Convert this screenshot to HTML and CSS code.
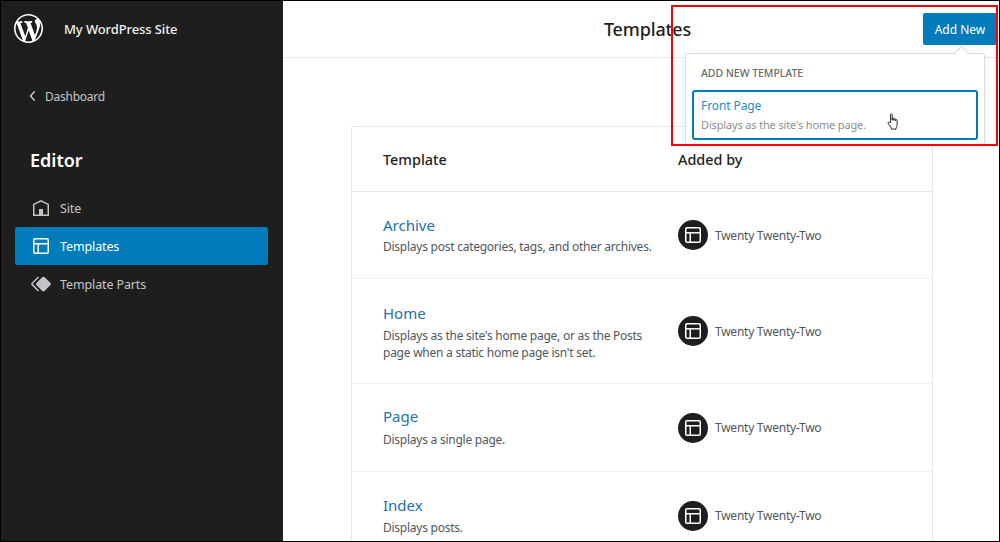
FILE: index.html
```html
<!DOCTYPE html>
<html lang="en">
<head>
    <meta charset="UTF-8">
    <meta name="viewport" content="width=device-width, initial-scale=1.0">
    <title>Templates</title>
    <link rel="stylesheet" href="styles.css">
</head>
<body>
    <div class="editor">
        <aside class="sidebar">
            <div class="site-row">
                <svg class="wp-logo" viewBox="0 0 20 20"><path d="M20 10c0-5.51-4.49-10-10-10C4.48 0 0 4.49 0 10c0 5.52 4.48 10 10 10 5.51 0 10-4.48 10-10zM7.78 15.37L4.37 6.22c.55-.02 1.17-.08 1.17-.08.5-.06.44-1.13-.06-1.11 0 0-1.45.11-2.37.11-.18 0-.37 0-.58-.01C4.12 2.69 6.87 1.11 10 1.11c2.33 0 4.45.87 6.05 2.34-.68-.11-1.65.39-1.65 1.58 0 .74.45 1.36.9 2.1.35.61.55 1.36.55 2.46 0 1.49-1.4 5-1.4 5l-3.03-8.37c.54-.02.82-.17.82-.17.5-.05.44-1.25-.06-1.22 0 0-1.44.12-2.38.12-.87 0-2.33-.12-2.33-.12-.5-.03-.56 1.2-.06 1.22l.92.08 1.26 3.41zM17.41 10c.24-.64.74-1.87.43-4.25.7 1.29 1.05 2.71 1.05 4.25 0 3.29-1.73 6.24-4.4 7.78.97-2.59 1.94-5.2 2.92-7.78zM6.1 18.09C3.12 16.65 1.11 13.53 1.11 10c0-1.3.23-2.48.72-3.59C3.25 10.3 4.67 14.2 6.1 18.09zm4.03-6.63l2.58 6.98c-.86.29-1.76.45-2.71.45-.79 0-1.57-.11-2.29-.33.81-2.38 1.62-4.74 2.42-7.1z"/></svg>
                <span class="site-name">My WordPress Site</span>
            </div>
            <a class="back-link">
                <svg class="back-icon" viewBox="0 0 24 24"><path d="M14.6 7l-1.2-1L8 12l5.4 6 1.2-1-4.6-5z"/></svg>
                <span>Dashboard</span>
            </a>
            <h2 class="sidebar-title">Editor</h2>
            <ul class="nav-list">
                <li class="nav-item">
                    <svg class="nav-icon" viewBox="0 0 24 24"><path d="M12 4L4 7.9V20h16V7.9L12 4zm6.5 14.5H14V13h-4v5.5H5.5V8.8L12 5.7l6.5 3.1v9.7z"/></svg>
                    <span>Site</span>
                </li>
                <li class="nav-item active">
                    <svg class="nav-icon" viewBox="0 0 24 24"><path d="M18 5.5H6a.5.5 0 00-.5.5v3h13V6a.5.5 0 00-.5-.5zm.5 5H10v8h8a.5.5 0 00.5-.5v-7.5zm-10 0h-3V18a.5.5 0 00.5.5h2.5v-8zM6 4h12a2 2 0 012 2v12a2 2 0 01-2 2H6a2 2 0 01-2-2V6a2 2 0 012-2z"/></svg>
                    <span>Templates</span>
                </li>
                <li class="nav-item">
                    <svg class="nav-icon" viewBox="0 0 24 24"><path d="M21.3 10.8l-5.6-5.6c-.7-.7-1.8-.7-2.5 0l-5.6 5.6c-.7.7-.7 1.8 0 2.5l5.6 5.6c.3.3.8.5 1.2.5s.9-.2 1.2-.5l5.6-5.6c.8-.7.8-1.9.1-2.5zm-17.6 1L10 5.5l-1-1-6.3 6.3c-.7.7-.7 1.8 0 2.5L9 19.5l1.1-1.1-6.3-6.3c-.2 0-.2-.2-.1-.3z"/></svg>
                    <span>Template Parts</span>
                </li>
            </ul>
        </aside>

        <main class="content">
            <header class="content-header">
                <h1 class="page-title">Templates</h1>
                <button class="add-new">Add New</button>
            </header>

            <section class="template-table">
                <div class="table-row table-head">
                    <div class="col-name">Template</div>
                    <div class="col-author">Added by</div>
                </div>
                <div class="table-row row-archive">
                    <div class="col-name">
                        <a class="template-link">Archive</a>
                        <p class="template-desc">Displays post categories, tags, and other archives.</p>
                    </div>
                    <div class="col-author">
                        <span class="author-badge"><svg viewBox="0 0 24 24"><path d="M18 5.5H6a.5.5 0 00-.5.5v3h13V6a.5.5 0 00-.5-.5zm.5 5H10v8h8a.5.5 0 00.5-.5v-7.5zm-10 0h-3V18a.5.5 0 00.5.5h2.5v-8zM6 4h12a2 2 0 012 2v12a2 2 0 01-2 2H6a2 2 0 01-2-2V6a2 2 0 012-2z"/></svg></span>
                        <span>Twenty Twenty-Two</span>
                    </div>
                </div>
                <div class="table-row row-home">
                    <div class="col-name">
                        <a class="template-link">Home</a>
                        <p class="template-desc">Displays as the site's home page, or as the Posts<br>page when a static home page isn't set.</p>
                    </div>
                    <div class="col-author">
                        <span class="author-badge"><svg viewBox="0 0 24 24"><path d="M18 5.5H6a.5.5 0 00-.5.5v3h13V6a.5.5 0 00-.5-.5zm.5 5H10v8h8a.5.5 0 00.5-.5v-7.5zm-10 0h-3V18a.5.5 0 00.5.5h2.5v-8zM6 4h12a2 2 0 012 2v12a2 2 0 01-2 2H6a2 2 0 01-2-2V6a2 2 0 012-2z"/></svg></span>
                        <span>Twenty Twenty-Two</span>
                    </div>
                </div>
                <div class="table-row row-page">
                    <div class="col-name">
                        <a class="template-link">Page</a>
                        <p class="template-desc">Displays a single page.</p>
                    </div>
                    <div class="col-author">
                        <span class="author-badge"><svg viewBox="0 0 24 24"><path d="M18 5.5H6a.5.5 0 00-.5.5v3h13V6a.5.5 0 00-.5-.5zm.5 5H10v8h8a.5.5 0 00.5-.5v-7.5zm-10 0h-3V18a.5.5 0 00.5.5h2.5v-8zM6 4h12a2 2 0 012 2v12a2 2 0 01-2 2H6a2 2 0 01-2-2V6a2 2 0 012-2z"/></svg></span>
                        <span>Twenty Twenty-Two</span>
                    </div>
                </div>
                <div class="table-row row-index">
                    <div class="col-name">
                        <a class="template-link">Index</a>
                        <p class="template-desc">Displays posts.</p>
                    </div>
                    <div class="col-author">
                        <span class="author-badge"><svg viewBox="0 0 24 24"><path d="M18 5.5H6a.5.5 0 00-.5.5v3h13V6a.5.5 0 00-.5-.5zm.5 5H10v8h8a.5.5 0 00.5-.5v-7.5zm-10 0h-3V18a.5.5 0 00.5.5h2.5v-8zM6 4h12a2 2 0 012 2v12a2 2 0 01-2 2H6a2 2 0 01-2-2V6a2 2 0 012-2z"/></svg></span>
                        <span>Twenty Twenty-Two</span>
                    </div>
                </div>
            </section>
        </main>

        <div class="popover">
            <span class="popover-arrow"></span>
            <h3 class="popover-title">ADD NEW TEMPLATE</h3>
            <div class="popover-option">
                <div class="option-name">Front Page</div>
                <div class="option-desc">Displays as the site's home page.</div>
                <svg class="hand-cursor" viewBox="0 0 14 18"><path d="M4.2 10.2V2.4c0-.8 1.6-.8 1.6 0v5.4-1.6c0-.8 1.6-.8 1.6 0v1.8-1c0-.8 1.5-.8 1.5 0v1.3-.5c0-.8 1.5-.8 1.5 0v4.2c0 1.6-.5 2.3-1 3.3v.9H5v-1.1L2 10.900c-.6-.8.4-1.700 1.200-1.100z" fill="#fff" stroke="#222" stroke-width=".9" stroke-linejoin="round"/></svg>
            </div>
        </div>
        <div class="highlight-box"></div>
    </div>
</body>
</html>
```

FILE: styles.css
```css
* {
    padding: 0;
    margin: 0;
    box-sizing: border-box;
}
ul {
    list-style: none;
}
html,
body {
    height: 100%;
    overflow: hidden;
}
body {
    font-family: "Noto Sans", "Open Sans", sans-serif;
    font-size: 12px;
    letter-spacing: -0.25px;
    color: #50575e;
    background: #fff;
}
.editor {
    position: relative;
    display: flex;
    height: 542px;
    overflow: hidden;
    border: 1px solid #000;
}

/* sidebar */
.sidebar {
    width: 282px;
    flex-shrink: 0;
    background: #1e1e1e;
    color: #c3c4c7;
    padding: 0 14px;
}
.site-row {
    display: flex;
    align-items: center;
    height: 55px;
    color: #f0f0f0;
    font-size: 13px;
    letter-spacing: -0.1px;
    font-weight: 500;
}
.wp-logo {
    width: 29px;
    height: 29px;
    fill: #fff;
    margin-left: -1px;
    margin-right: 21px;
}
.back-link {
    display: flex;
    align-items: center;
    margin-top: 21px;
    height: 38px;
    padding-left: 8px;
}
.back-icon {
    width: 20px;
    height: 20px;
    fill: #e0e0e0;
    margin-right: 2px;
}
.sidebar-title {
    margin-top: 31px;
    padding-left: 15px;
    font-size: 18px;
    font-weight: 600;
    line-height: 28px;
    letter-spacing: 0;
    color: #fff;
}
.nav-list {
    margin-top: 15px;
    font-size: 12.5px;
    letter-spacing: -0.12px;
}
.nav-item {
    display: flex;
    align-items: center;
    height: 38px;
    padding-left: 14px;
    border-radius: 2px;
    width: 253px;
}
.nav-item.active {
    background: #007cba;
    color: #fff;
}
.nav-icon {
    width: 24px;
    height: 24px;
    fill: currentColor;
    margin-right: 7px;
}

/* main */
.content {
    flex: 1;
    min-width: 0;
}
.content-header {
    display: flex;
    align-items: center;
    height: 57px;
    border-bottom: 1px solid #e8e8e8;
    position: relative;
}
.page-title {
    flex: 1;
    text-align: center;
    font-size: 18px;
    font-weight: 500;
    letter-spacing: -0.15px;
    color: #1e1e1e;
    padding-left: 13px;
}
.add-new {
    position: absolute;
    top: 12px;
    right: 2px;
    width: 74px;
    height: 32px;
    border: 0;
    border-radius: 2px;
    background: #007cba;
    color: #fff;
    font-family: inherit;
    font-size: 12px;
}
.template-table {
    width: 582px;
    margin: 68px 0 0 68px;
    border: 1px solid #e8e8e8;
    border-radius: 2px;
}
.table-row {
    display: flex;
    align-items: center;
    padding-left: 31px;
    border-bottom: 1px solid #f0f0f0;
}
.table-head {
    height: 65px;
    border-bottom-color: #e8e8e8;
    font-size: 14.4px;
    letter-spacing: 0;
    font-weight: 500;
    color: #1e1e1e;
}
.row-archive {
    height: 87px;
}
.row-home {
    height: 105px;
    padding-top: 2px;
}
.row-page {
    height: 88px;
}
.row-index {
    height: 88px;
    padding-top: 1px;
}
.col-name {
    width: 295px;
    flex-shrink: 0;
}
.col-author {
    display: flex;
    align-items: center;
}
.row-home .col-author {
    margin-top: -2px;
}
.row-index .col-author {
    margin-top: -1px;
}
.author-badge {
    display: flex;
    align-items: center;
    justify-content: center;
    width: 30px;
    height: 30px;
    margin-right: 7px;
    border-radius: 50%;
    background: #1e1e1e;
}
.author-badge svg {
    width: 24px;
    height: 24px;
    fill: #fff;
}
.template-link {
    display: block;
    font-size: 15px;
    line-height: 20px;
    letter-spacing: 0;
    color: #2271b1;
}
.template-desc {
    line-height: 18px;
    margin-top: 4px;
}
.row-home .template-desc {
    line-height: 17.5px;
}
.row-archive .template-desc {
    margin-top: 3px;
}
.row-page .template-desc {
    margin-top: 5px;
}

/* popover over the header */
.popover {
    position: absolute;
    top: 52px;
    left: 684px;
    width: 300px;
    height: 92px;
    padding: 0 6px;
    background: #fff;
    border: 1px solid #ddd;
    border-radius: 2px;
    box-shadow: 0 2px 6px rgba(0, 0, 0, 0.08);
}
.popover-arrow {
    position: absolute;
    top: -6px;
    right: 17px;
    width: 11px;
    height: 11px;
    background: #fff;
    border-top: 1px solid #ddd;
    border-left: 1px solid #ddd;
    transform: rotate(45deg);
}
.popover-title {
    padding: 12px 9px 0;
    font-size: 10.5px;
    line-height: 15px;
    font-weight: 500;
    letter-spacing: -0.05px;
    color: #6a6a6a;
}
.popover-option {
    position: relative;
    height: 50px;
    margin-top: 9px;
    padding: 5px 7px;
    border: 2px solid #007cba;
    border-radius: 3px;
}
.option-name {
    font-size: 12px;
    line-height: 17px;
    letter-spacing: -0.1px;
    color: #2a8cc4;
}
.option-desc {
    margin-top: 3px;
    font-size: 11px;
    line-height: 16px;
    letter-spacing: -0.15px;
    color: #8a8f94;
}
.hand-cursor {
    position: absolute;
    top: 20px;
    left: 192px;
    width: 15px;
    height: 19px;
}
.highlight-box {
    position: absolute;
    top: 4px;
    left: 670px;
    width: 327px;
    height: 141px;
    border: 2px solid #f00;
    pointer-events: none;
}
```
